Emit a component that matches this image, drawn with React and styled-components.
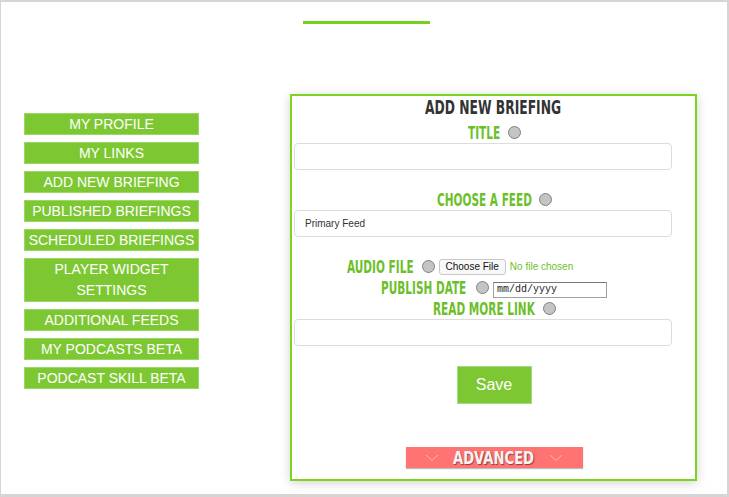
import React from "react";
import styled, { createGlobalStyle } from "styled-components";

const GlobalStyle = createGlobalStyle`
  html, body {
    margin: 0;
    padding: 0;
    background: #fff;
    font-family: "Liberation Sans", Arial, sans-serif;
  }
`;

const menuItems = [
  "My Profile",
  "My Links",
  "Add New Briefing",
  "Published Briefings",
  "Scheduled Briefings",
  "Player Widget Settings",
  "Additional Feeds",
  "My Podcasts Beta",
  "Podcast Skill Beta",
];

// no narrow display face offline: squeeze a condensed bold one
const condensed = `"DejaVu Sans Condensed", "DejaVu Sans", sans-serif`;

function Chevron() {
  return (
    <svg width="14" height="8" viewBox="0 0 14 8">
      <path d="M1 1 L7 6.5 L13 1" fill="none" stroke="#ffb3b3" strokeWidth="1" />
    </svg>
  );
}

function FieldLabel({ width, children }) {
  return (
    <Label $w={width}>
      <span>{children}</span>
    </Label>
  );
}

function App() {
  return (
    <Frame>
      <GlobalStyle />
      <TopRule />
      <Body>
        <Sidebar>
          {menuItems.map((item) => (
            <MenuButton key={item} $tall={item === "Player Widget Settings"}>
              {item === "Player Widget Settings" ? (
                <>
                  Player Widget
                  <br />
                  Settings
                </>
              ) : (
                item
              )}
            </MenuButton>
          ))}
        </Sidebar>
        <Panel>
          <Heading>
            <span>ADD NEW BRIEFING</span>
          </Heading>
          <LabelRow $top={5}>
            <FieldLabel width={31}>TITLE</FieldLabel>
            <Radio />
          </LabelRow>
          <TextBox />
          <LabelRow $top={19}>
            <FieldLabel width={93}>CHOOSE A FEED</FieldLabel>
            <Radio />
          </LabelRow>
          <TextBox as="div">
            <SelectText>Primary Feed</SelectText>
          </TextBox>
          <LabelRow $top={19}>
            <FieldLabel width={66}>AUDIO FILE</FieldLabel>
            <Radio />
            <FilePicker>
              <FileButton>Choose File</FileButton>
              <FileStatus>No file chosen</FileStatus>
            </FilePicker>
          </LabelRow>
          <LabelRow $top={0}>
            <FieldLabel width={86}>PUBLISH DATE</FieldLabel>
            <Radio />
            <DateBox>mm/dd/yyyy</DateBox>
          </LabelRow>
          <LabelRow $top={0}>
            <FieldLabel width={101}>READ MORE LINK</FieldLabel>
            <Radio />
          </LabelRow>
          <TextBox />
          <SaveButton>Save</SaveButton>
          <AdvancedBar>
            <Chevron />
            <AdvancedText>
              <span>ADVANCED</span>
            </AdvancedText>
            <Chevron />
          </AdvancedBar>
        </Panel>
      </Body>
    </Frame>
  );
}

const Frame = styled.div`
  box-sizing: border-box;
  width: 729px;
  height: 497px;
  border: 2px solid #d5d5d5;
  border-left-width: 1px;
  border-bottom-width: 3px;
  overflow: hidden;
  display: flex;
  flex-direction: column;
`;

const TopRule = styled.div`
  width: 127px;
  height: 3px;
  background: #74d11c;
  margin: 19px 0 0 302px;
`;

const Body = styled.div`
  display: flex;
  align-items: flex-start;
  margin-top: 70px;
`;

const Sidebar = styled.ul`
  list-style: none;
  margin: 19px 0 0 23px;
  padding: 0;
  width: 175px;
  display: flex;
  flex-direction: column;
  gap: 7px;
`;

const MenuButton = styled.li`
  box-sizing: border-box;
  height: ${(p) => (p.$tall ? "44px" : "22px")};
  background: #7dc832;
  border: 1px solid #9ad864;
  color: #fff;
  font-size: 14px;
  line-height: ${(p) => (p.$tall ? "21px" : "20px")};
  text-align: center;
  text-transform: uppercase;
  white-space: nowrap;
`;

const Panel = styled.section`
  box-sizing: border-box;
  width: 407px;
  height: 387px;
  margin-left: 91px;
  border: 2px solid #7ed321;
  box-shadow: 0 2px 10px rgba(0, 0, 0, 0.18);
  padding: 0 23px 0 2px;
  display: flex;
  flex-direction: column;
  align-items: stretch;
`;

const Heading = styled.h2`
  align-self: center;
  width: 139px;
  margin: 1px 0 0 22px;
  height: 20px;
  font-family: ${condensed};
  font-weight: 700;
  font-size: 19px;
  line-height: 20px;
  color: #333;
  white-space: nowrap;
  span {
    display: inline-block;
    transform: scaleX(0.72);
    transform-origin: left center;
  }
`;

const LabelRow = styled.div`
  display: flex;
  align-items: center;
  justify-content: center;
  height: 21px;
  margin-top: ${(p) => p.$top}px;
  margin-left: 22px;
`;

const Label = styled.span`
  width: ${(p) => p.$w}px;
  margin-right: 9px;
  font-family: ${condensed};
  font-weight: 700;
  font-size: 18px;
  line-height: 21px;
  color: #6cbf2a;
  white-space: nowrap;
  span {
    display: inline-block;
    transform: scaleX(0.65);
    transform-origin: left center;
  }
`;

const Radio = styled.span`
  box-sizing: border-box;
  width: 13px;
  height: 13px;
  border-radius: 50%;
  background: #c4c4c4;
  border: 1.5px solid #808080;
`;

const TextBox = styled.input`
  box-sizing: border-box;
  width: 378px;
  height: 27px;
  margin: 0;
  border: 1px solid #dcdcdc;
  border-radius: 4px;
  background: #fff;
  padding: 0 10px;
  font-family: "Liberation Sans", Arial, sans-serif;
  font-size: 10px;
  display: flex;
  align-items: center;
`;

const SelectText = styled.span`
  color: #333;
  font-size: 10px;
`;

const FilePicker = styled.span`
  display: flex;
  align-items: center;
  gap: 4px;
  width: 203px;
  margin-left: 4px;
`;

const FileButton = styled.span`
  box-sizing: border-box;
  height: 16px;
  padding: 0 6px;
  border: 1px solid #c8c8c8;
  border-radius: 3px;
  background: #f8f8f8;
  color: #111;
  font-size: 10px;
  line-height: 14px;
`;

const FileStatus = styled.span`
  color: #6cbf2a;
  font-size: 10px;
`;

const DateBox = styled.span`
  box-sizing: border-box;
  width: 114px;
  height: 16px;
  margin: 4px 0 0 4px;
  border: 1px solid #a0a0a0;
  border-top-color: #777;
  padding: 1px 3px;
  font-family: "Liberation Mono", "Courier New", monospace;
  font-size: 10px;
  line-height: 12px;
  color: #222;
`;

const SaveButton = styled.button`
  align-self: center;
  box-sizing: border-box;
  width: 75px;
  height: 38px;
  margin: 20px 0 0 22px;
  background: #7dc832;
  border: 1px solid #a6d98a;
  color: #fff;
  font-family: "Liberation Sans", Arial, sans-serif;
  font-size: 16px;
`;

const AdvancedBar = styled.div`
  align-self: center;
  box-sizing: border-box;
  width: 177px;
  height: 21px;
  margin: 43px 0 0 22px;
  background: #ff7373;
  box-shadow: 0 1px 1px rgba(0, 0, 0, 0.25);
  display: flex;
  align-items: center;
  justify-content: center;
  gap: 14px;
`;

const AdvancedText = styled.span`
  width: 82px;
  font-family: ${condensed};
  font-weight: 700;
  font-size: 17px;
  line-height: 20px;
  color: #f4f4f4;
  text-shadow: 1px 1px 1px rgba(0, 0, 0, 0.45);
  white-space: nowrap;
  span {
    display: inline-block;
    transform: scaleX(0.86);
    transform-origin: left center;
  }
`;

export default App;
